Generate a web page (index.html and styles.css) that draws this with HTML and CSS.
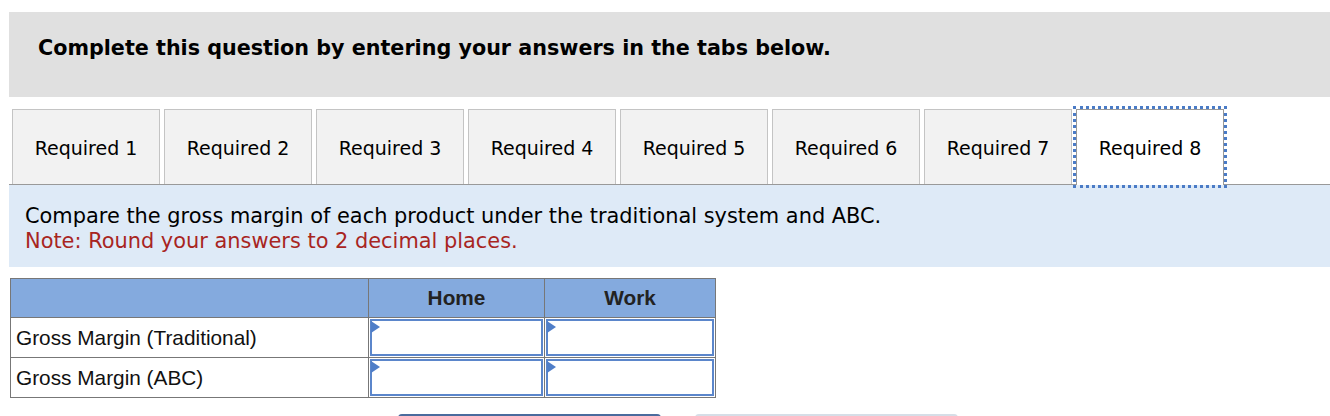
FILE: index.html
```html
<!DOCTYPE html>
<html>
<head>
<meta charset="utf-8">
<link rel="stylesheet" href="styles.css">
</head>
<body>
<div class="page">
  <div class="banner">Complete this question by entering your answers in the tabs below.</div>
  <div class="tabs">
    <div class="tab">Required 1</div>
    <div class="tab">Required 2</div>
    <div class="tab">Required 3</div>
    <div class="tab">Required 4</div>
    <div class="tab">Required 5</div>
    <div class="tab">Required 6</div>
    <div class="tab">Required 7</div>
    <div class="tab active">Required 8</div>
  </div>
  <div class="prompt">
    <div>Compare the gross margin of each product under the traditional system and ABC.</div>
    <div class="note">Note: Round your answers to 2 decimal places.</div>
  </div>
  <table class="grid">
    <colgroup>
      <col class="c-label">
      <col class="c-home">
      <col class="c-work">
    </colgroup>
    <thead>
      <tr><th></th><th>Home</th><th>Work</th></tr>
    </thead>
    <tbody>
      <tr>
        <td class="label">Gross Margin (Traditional)</td>
        <td class="cell"><div class="input"><span class="flag"></span></div></td>
        <td class="cell"><div class="input"><span class="flag"></span></div></td>
      </tr>
      <tr>
        <td class="label">Gross Margin (ABC)</td>
        <td class="cell"><div class="input"><span class="flag"></span></div></td>
        <td class="cell"><div class="input"><span class="flag"></span></div></td>
      </tr>
    </tbody>
  </table>
  <div class="nav">
    <div class="btn prev"></div>
    <div class="btn next"></div>
  </div>
</div>
</body>
</html>
```
FILE: styles.css
```css
html, body {
  margin: 0;
  padding: 0;
  background: #fff;
  overflow: hidden;
}
.page {
  padding: 12px 0 0 9px;
  font-family: "DejaVu Sans", Verdana, sans-serif;
  color: #000;
}
.banner {
  background: #e0e0e0;
  height: 85px;
  box-sizing: border-box;
  padding: 24px 0 0 29px;
  font-weight: bold;
  font-size: 20.7px;
  line-height: 24px;
}
.tabs {
  display: flex;
  gap: 4px;
  margin-top: 12px;
  padding-left: 3px;
  border-bottom: 1px solid #999;
  height: 75px;
}
.tab {
  width: 148px;
  height: 75px;
  box-sizing: border-box;
  border: 1px solid #c4c4c4;
  border-bottom: none;
  background: #f2f2f2;
  display: flex;
  align-items: center;
  justify-content: center;
  font-size: 19px;
  padding-top: 2px;
}
.tab.active {
  background: #fff;
  border-color: #999;
  height: 76px;
  padding-bottom: 1px;
  outline: 3px dotted #4a7bc6;
  outline-offset: 0;
  position: relative;
}
.prompt {
  background: #deeaf7;
  height: 82px;
  box-sizing: border-box;
  padding: 19px 0 0 16px;
  font-size: 20.9px;
  line-height: 25px;
}
.note {
  color: #a8251f;
}
.grid {
  margin: 11px 0 0 1px;
  border-collapse: collapse;
  font-family: "Liberation Sans", Arial, sans-serif;
  font-size: 20.8px;
  border: 1px solid #777;
}
.c-label { width: 358px; }
.c-home { width: 176px; }
.c-work { width: 171px; }
.grid th {
  background: #84aade;
  height: 38px;
  border: 1px solid #777;
  font-weight: bold;
  color: #222;
  padding: 0;
  vertical-align: middle;
}
.grid td {
  height: 38px;
  border: 1px solid #777;
  padding: 0;
}
.grid td.label {
  padding-left: 5px;
  color: #111;
}
.grid td.cell {
  padding: 1px 1px 0 1px;
  vertical-align: top;
}
.input {
  position: relative;
  height: 37px;
  box-sizing: border-box;
  border: 2px solid #5b86cb;
  background: #fff;
}
.flag {
  position: absolute;
  left: -1px;
  top: 0;
  width: 0;
  height: 0;
  border-top: 6px solid transparent;
  border-bottom: 6px solid transparent;
  border-left: 9px solid #4f7ec8;
}
.nav {
  display: flex;
  gap: 34px;
  margin: 16px 0 0 389px;
}
.btn {
  width: 263px;
  height: 40px;
  box-sizing: border-box;
  border-radius: 4px;
}
.btn.prev {
  background: #fff;
  border: 2px solid #4a6b9d;
}
.btn.next {
  background: #fff;
  border: 2px solid #d6dee7;
}
```
